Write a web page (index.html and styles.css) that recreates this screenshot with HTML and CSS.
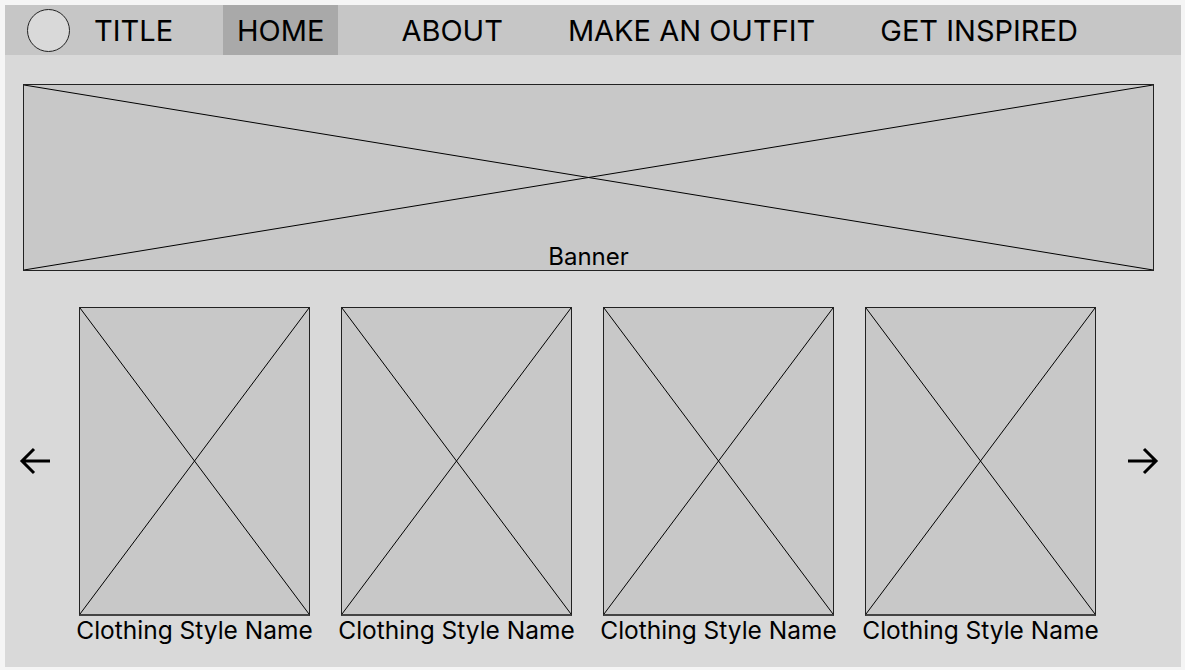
FILE: index.html
```html
<html>
<head>
    <title>Outfit Wireframe</title>
    <link rel="stylesheet" href="styles.css">
</head>
<body>

    <div class="frame">
        <nav class="topbar">
            <span class="logo"></span>
            <span class="site-title">TITLE</span>
            <a class="nav-link active" href="#">HOME</a>
            <a class="nav-link about" href="#">ABOUT</a>
            <a class="nav-link outfit" href="#">MAKE AN OUTFIT</a>
            <a class="nav-link inspired" href="#">GET INSPIRED</a>
        </nav>

        <div class="banner placeholder">
            <svg class="cross" viewBox="0 0 100 100" preserveAspectRatio="none"><line x1="0" y1="0" x2="100" y2="100"/><line x1="100" y1="0" x2="0" y2="100"/></svg>
            <span class="banner-label">Banner</span>
        </div>

        <div class="carousel">
            <svg class="arrow" viewBox="0 0 32 32"><path d="M31 16H3M15 4L3 16l12 12"/></svg>
            <div class="cards">
                <div class="card">
                    <div class="card-img placeholder"><svg class="cross" viewBox="0 0 100 100" preserveAspectRatio="none"><line x1="0" y1="0" x2="100" y2="100"/><line x1="100" y1="0" x2="0" y2="100"/></svg></div>
                    <span class="card-label">Clothing Style Name</span>
                </div>
                <div class="card">
                    <div class="card-img placeholder"><svg class="cross" viewBox="0 0 100 100" preserveAspectRatio="none"><line x1="0" y1="0" x2="100" y2="100"/><line x1="100" y1="0" x2="0" y2="100"/></svg></div>
                    <span class="card-label">Clothing Style Name</span>
                </div>
                <div class="card">
                    <div class="card-img placeholder"><svg class="cross" viewBox="0 0 100 100" preserveAspectRatio="none"><line x1="0" y1="0" x2="100" y2="100"/><line x1="100" y1="0" x2="0" y2="100"/></svg></div>
                    <span class="card-label">Clothing Style Name</span>
                </div>
                <div class="card">
                    <div class="card-img placeholder"><svg class="cross" viewBox="0 0 100 100" preserveAspectRatio="none"><line x1="0" y1="0" x2="100" y2="100"/><line x1="100" y1="0" x2="0" y2="100"/></svg></div>
                    <span class="card-label">Clothing Style Name</span>
                </div>
            </div>
            <svg class="arrow" viewBox="0 0 32 32"><path d="M1 16h28M17 4l12 12-12 12"/></svg>
        </div>
    </div>

</body>
</html>
```

FILE: styles.css
```css
body { margin: 0; background-color: #f5f5f5; font-family: Inter, "Noto Sans", sans-serif; color: #000; }
.frame { margin: 5px; width: 1176px; height: 662px; background-color: #d9d9d9; }

.topbar { display: flex; align-items: center; height: 50px; background-color: #c6c6c6; }
.logo { width: 41px; height: 41px; margin-left: 22px; border: 1px solid #222; border-radius: 50%; background-color: #d9d9d9; }
.site-title { margin-left: 24px; font-size: 29px; }
.nav-link { display: flex; align-items: center; height: 50px; padding: 0 14px; font-size: 29px; color: #000; text-decoration: none; }
.nav-link.active { margin-left: 50px; background-color: #a9a9a9; }
.nav-link.about { margin-left: 49px; }
.nav-link.outfit { margin-left: 37px; }
.nav-link.inspired { margin-left: 37px; }

.placeholder { position: relative; box-sizing: border-box; border: 1px solid #222; background-color: #c8c8c8; }
.cross { position: absolute; top: 0; left: 0; width: 100%; height: 100%; }
.cross line { stroke: #000; stroke-width: 1; vector-effect: non-scaling-stroke; }

.banner { display: flex; align-items: flex-end; justify-content: center; width: 1131px; height: 187px; margin: 29px 0 0 18px; }
.banner-label { position: relative; font-size: 24px; line-height: 27px; }

.carousel { display: flex; align-items: flex-start; margin-top: 36px; padding-left: 14px; }
.arrow { width: 32px; height: 32px; margin-top: 138px; }
.arrow path { fill: none; stroke: #000; stroke-width: 3; }
.cards { display: flex; gap: 31px; margin: 0 31px 0 28px; }
.card { display: flex; flex-direction: column; align-items: center; width: 231px; }
.card-img { width: 231px; height: 309px; border-bottom: 2px solid #444; }
.card-label { white-space: nowrap; font-size: 24.5px; line-height: 28px; }
```
